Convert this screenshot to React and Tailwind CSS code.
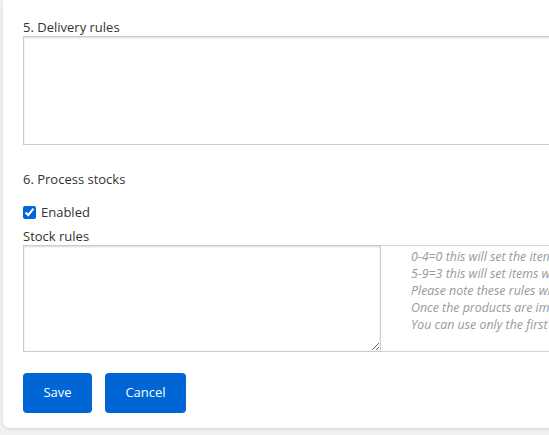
import { useState } from 'react';

export default function App() {
    const [enabled, setEnabled] = useState(true);

    const help = [
        '0-4=0 this will set the items with stock from 0 to 4 to stock 0',
        '5-9=3 this will set items with stock from 5 to 9 to stock 3',
        'Please note these rules will be applied only when importing products',
        'Once the products are imported, stock is taken as it is',
        'You can use only the first matching rule for each product',
    ];

    return (
        <div className="w-[549px] h-[435px] overflow-hidden bg-[#f1f1f1]" style={{ fontFamily: '"Open Sans", "Liberation Sans", sans-serif' }}>
            <div className="ml-[3px] w-[700px] h-[428px] bg-white rounded-bl-[6px] shadow-[0_1px_3px_rgba(0,0,0,0.12)] pl-[20px] pt-[18px] text-[13px] text-[#333]">
                <label className="block leading-[18px]">5. Delivery rules</label>
                <textarea className="block w-[640px] h-[109px] border border-[#ccc] shadow-[inset_0_1px_2px_rgba(0,0,0,0.15)] resize-none outline-none" />

                <div className="mt-[25px] leading-[18px]">6. Process stocks</div>

                <label className="mt-[15px] flex items-center gap-[5px] leading-[18px]">
                    <input type="checkbox" checked={enabled} onChange={e => setEnabled(e.target.checked)} className="w-[13px] h-[13px] m-0 accent-[#0066d6]" />
                    Enabled
                </label>

                <label className="mt-[6px] block leading-[18px]">Stock rules</label>
                <div className="flex">
                    <textarea className="block w-[358px] h-[107px] border border-[#ccc] shadow-[inset_0_1px_2px_rgba(0,0,0,0.15)] outline-none" />
                    <div className="flex-1 h-[107px] border-t border-b border-[#d6d6d6] pl-[30px] pt-[2px] italic text-[12.4px] leading-[17px] text-[#999] whitespace-nowrap overflow-hidden">
                        {help.map((h, i) => <div key={i}>{h}</div>)}
                    </div>
                </div>

                <div className="mt-[21px] flex gap-[13px]">
                    <button className="h-[40px] w-[69px] rounded-[4px] bg-[#0066d6] text-white text-[13px]">Save</button>
                    <button className="h-[40px] w-[81px] rounded-[4px] bg-[#0066d6] text-white text-[13px]">Cancel</button>
                </div>
            </div>
        </div>
    );
}
